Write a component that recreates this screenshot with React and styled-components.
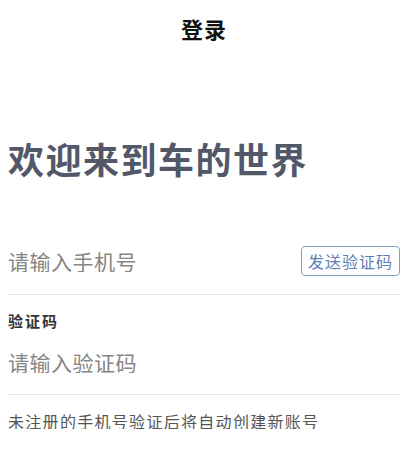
import React, { useState } from 'react';
import styled, { createGlobalStyle } from 'styled-components';

const GlobalStyle = createGlobalStyle`
  html, body {
    margin: 0;
    padding: 0;
    background: #fff;
  }
  body {
    font-family: 'Noto Sans CJK SC', 'Noto Sans', sans-serif;
  }
  * {
    box-sizing: border-box;
  }
`;

// 상단 바
const Header = styled.div`
  height: 56px;
  display: flex;
  align-items: center;
  justify-content: center;
`;

const HeaderTitle = styled.h1`
  margin: 0;
  font-size: 22px;
  line-height: 1;
  font-weight: 700;
  color: #111;
  letter-spacing: 1px;
`;

const Body = styled.div`
  padding: 0 8px;
`;

const Welcome = styled.h2`
  margin: 84px 0 0;
  font-size: 36px;
  line-height: 1;
  font-weight: 700;
  color: #535869;
  letter-spacing: 1.5px;
`;

// 입력 줄
const Field = styled.div`
  display: flex;
  flex-direction: column;
  margin-top: ${(p) => p.$top}px;
  padding-top: ${(p) => p.$padTop}px;
  padding-bottom: ${(p) => p.$padBottom}px;
  border-bottom: 1px solid #e6e6e6;
`;

const Row = styled.div`
  display: flex;
  align-items: center;
  justify-content: space-between;
  gap: 8px;
`;

const Input = styled.input`
  display: block;
  width: ${(p) => (p.$grow ? 'auto' : '100%')};
  flex: ${(p) => (p.$grow ? '1 1 auto' : 'none')};
  min-width: 0;
  border: none;
  outline: none;
  padding: 0;
  margin: 0;
  background: transparent;
  font-family: inherit;
  font-size: 21px;
  line-height: 22px;
  height: 22px;
  color: #333;
  letter-spacing: 0.5px;
  &::placeholder {
    color: #868686;
  }
`;

const SendButton = styled.button`
  height: 30px;
  padding: 0 6px;
  border: 1px solid #7f9fc9;
  border-radius: 4px;
  background: #fff;
  color: #5b7fb8;
  font-family: inherit;
  font-size: 16px;
  letter-spacing: 1px;
  cursor: pointer;
`;

const Label = styled.div`
  font-size: 15px;
  line-height: 1;
  font-weight: 700;
  color: #333;
  letter-spacing: 2px;
  margin-bottom: 23px;
`;

const Tip = styled.p`
  margin: 18px 0 0;
  font-size: 16px;
  line-height: 1;
  color: #555;
  letter-spacing: 1.3px;
`;

function App() {
  const [phone, setPhone] = useState('');
  const [code, setCode] = useState('');

  return (
    <>
      <GlobalStyle />
      <Header>
        <HeaderTitle>登录</HeaderTitle>
      </Header>
      <Body>
        <Welcome>欢迎来到车的世界</Welcome>
        <Field $top={56} $padTop={14} $padBottom={18}>
          <Row>
            <Input
              $grow
              value={phone}
              onChange={(e) => setPhone(e.target.value)}
              placeholder="请输入手机号"
            />
            <SendButton>发送验证码</SendButton>
          </Row>
        </Field>
        <Field $top={18} $padTop={0} $padBottom={21}>
          <Label>验证码</Label>
          <Input
            value={code}
            onChange={(e) => setCode(e.target.value)}
            placeholder="请输入验证码"
          />
        </Field>
        <Tip>未注册的手机号验证后将自动创建新账号</Tip>
      </Body>
    </>
  );
}

export default App;
